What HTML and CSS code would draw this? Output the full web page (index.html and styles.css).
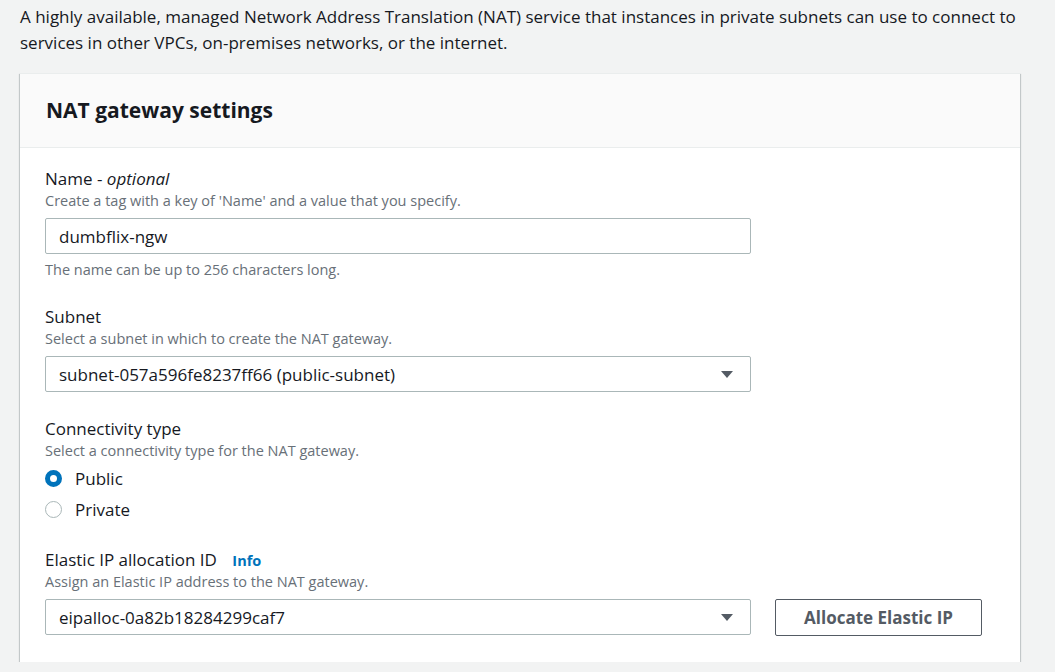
FILE: index.html
```html
<!DOCTYPE html>
<html lang="en">
<head>
<meta charset="utf-8">
<title>NAT gateway settings</title>
<link rel="stylesheet" href="styles.css">
</head>
<body>
<div class="page">
  <p class="intro">A highly available, managed Network Address Translation (NAT) service that instances in private subnets can use to connect to services in other VPCs, on-premises networks, or the internet.</p>
  <section class="card">
    <header class="card-header">
      <h2 class="card-title">NAT gateway settings</h2>
    </header>
    <div class="card-body">
      <div class="field">
        <div class="label">Name - <i>optional</i></div>
        <div class="desc">Create a tag with a key of 'Name' and a value that you specify.</div>
        <div class="control input">dumbflix-ngw</div>
        <div class="hint">The name can be up to 256 characters long.</div>
      </div>
      <div class="field">
        <div class="label">Subnet</div>
        <div class="desc">Select a subnet in which to create the NAT gateway.</div>
        <div class="control select">
          <span>subnet-057a596fe8237ff66 (public-subnet)</span>
          <svg class="caret" width="14" height="9" viewBox="0 0 14 9"><path d="M1 1h12L7 8z" fill="#545b64"/></svg>
        </div>
      </div>
      <div class="field">
        <div class="label">Connectivity type</div>
        <div class="desc">Select a connectivity type for the NAT gateway.</div>
        <div class="radios">
          <div class="radio-row"><span class="radio checked"></span><span>Public</span></div>
          <div class="radio-row"><span class="radio"></span><span>Private</span></div>
        </div>
      </div>
      <div class="field last">
        <div class="label">Elastic IP allocation ID <a class="info">Info</a></div>
        <div class="desc short">Assign an Elastic IP address to the NAT gateway.</div>
        <div class="row">
          <div class="control select">
            <span>eipalloc-0a82b18284299caf7</span>
            <svg class="caret" width="14" height="9" viewBox="0 0 14 9"><path d="M1 1h12L7 8z" fill="#545b64"/></svg>
          </div>
          <button class="btn">Allocate Elastic IP</button>
        </div>
      </div>
    </div>
  </section>
</div>
</body>
</html>
```

FILE: styles.css
```css
html, body {
  margin: 0;
  padding: 0;
  background: #f2f3f3;
}
body {
  font-family: "Open Sans", "Noto Sans", sans-serif;
  color: #16191f;
}
.page {
  padding: 4px 20px 0 20px;
}
.intro {
  margin: 0 0 17px 0;
  font-size: 17px;
  line-height: 26px;
  color: #16191f;
}
.card {
  margin-right: 15px;
  background: #fff;
  border-top: 1px solid #eaeded;
  box-shadow: 0 1px 1px 0 rgba(0, 28, 36, .3), 1px 1px 1px 0 rgba(0, 28, 36, .15), -1px 1px 1px 0 rgba(0, 28, 36, .15);
}
.card-header {
  background: #fafafa;
  border-bottom: 1px solid #eaeded;
  padding: 22px 26px 23px 26px;
}
.card-title {
  margin: 0;
  font-size: 21px;
  line-height: 28px;
  font-weight: 700;
}
.card-body {
  padding: 20px 26px 26px 25px;
}
.field {
  margin-bottom: 26px;
}
.field.last {
  margin-bottom: 0;
}
.label {
  font-size: 17px;
  line-height: 22px;
}
.desc {
  font-size: 14.5px;
  line-height: 22px;
  color: #687078;
}
.desc.short {
  line-height: 20px;
}
.hint {
  font-size: 14.5px;
  line-height: 20px;
  color: #687078;
  margin-top: 6px;
}
.control {
  margin-top: 6px;
  width: 706px;
  height: 36px;
  box-sizing: border-box;
  border: 1px solid #aab7b8;
  border-radius: 2px;
  background: #fff;
  padding: 0 14px 0 13px;
  display: flex;
  align-items: center;
  justify-content: space-between;
  font-size: 17px;
}
.caret {
  display: block;
  margin-right: 2px;
}
.radios {
  margin-top: 1px;
  margin-bottom: -1px;
}
.radio-row {
  display: flex;
  align-items: center;
  gap: 13px;
  height: 30px;
  margin-bottom: 1px;
  font-size: 17px;
}
.radio {
  width: 17px;
  height: 17px;
  box-sizing: border-box;
  border-radius: 50%;
  border: 1.5px solid #aab7b8;
  background: #fff;
}
.radio.checked {
  border: 5.5px solid #0073bb;
}
.info {
  font-size: 14.5px;
  font-weight: 700;
  color: #0073bb;
  margin-left: 11px;
}
.row {
  display: flex;
  align-items: flex-start;
  gap: 24px;
  margin-top: 7px;
}
.row .control {
  flex: none;
  margin-top: 0;
}
.btn {
  height: 37px;
  width: 207px;
  box-sizing: border-box;
  border: 1px solid #545b64;
  border-radius: 2px;
  background: #fff;
  color: #545b64;
  font-family: inherit;
  font-size: 17px;
  font-weight: 700;
  padding: 0;
}
```
